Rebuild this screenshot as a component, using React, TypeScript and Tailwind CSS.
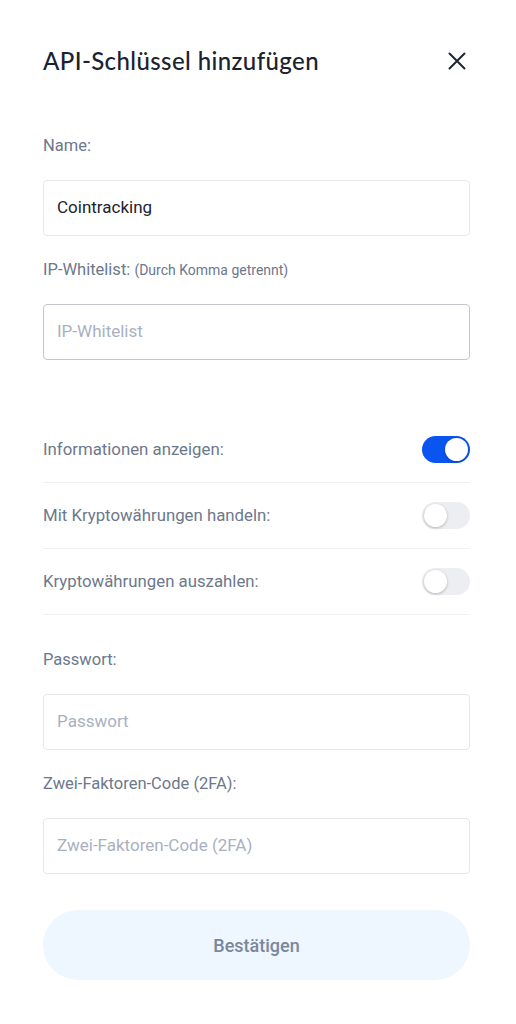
import { useState } from 'react'

function Toggle({ on }: { on: boolean }) {
  return (
    <div
      className={`relative w-[48px] h-[27px] rounded-full ${on ? 'bg-[#0a55f0]' : 'bg-[#eceef1]'}`}
    >
      <div
        className={`absolute top-[2px] w-[23px] h-[23px] rounded-full bg-white shadow-[0_1px_3px_rgba(0,0,0,0.25)] ${on ? 'right-[2px]' : 'left-[2px]'}`}
      />
    </div>
  )
}

function Field({ value, placeholder, focused }: { value?: string; placeholder: string; focused?: boolean }) {
  return (
    <div
      className={`h-[56px] flex items-center px-[13px] rounded-[4px] border ${focused ? 'border-[#c3c7cd]' : 'border-[#e6e8eb]'}`}
    >
      {value ? (
        <span className="text-[17px] text-[#1c2230]">{value}</span>
      ) : (
        <span className="text-[17px] text-[#a9b1bf]">{placeholder}</span>
      )}
    </div>
  )
}

export default function App() {
  const [perms] = useState([
    { label: 'Informationen anzeigen:', on: true },
    { label: 'Mit Kryptowährungen handeln:', on: false },
    { label: 'Kryptowährungen auszahlen:', on: false },
  ])

  return (
    <div className="min-h-screen bg-white pl-[43px] pr-[46px] pt-[46px] font-['Roboto',sans-serif]">
      {/* Header */}
      <div className="flex items-center justify-between h-[30px]">
        <h1 className="text-[24px] text-[#1c2230] font-['Lato',sans-serif] font-medium tracking-[0.4px]">
          API-Schlüssel hinzufügen
        </h1>
        <svg width="18" height="18" viewBox="0 0 18 18" className="mr-[4px]">
          <path d="M1.5 1.5 L16.5 16.5 M16.5 1.5 L1.5 16.5" stroke="#1f2533" strokeWidth="2" strokeLinecap="round" />
        </svg>
      </div>

      <div className="mt-[60px] text-[16.5px] leading-[20px] text-[#6c788c]">Name:</div>
      <div className="mt-[24px]">
        <Field value="Cointracking" placeholder="Name" />
      </div>

      <div className="mt-[24px] text-[16.5px] leading-[20px] text-[#6c788c]">
        IP-Whitelist: <span className="text-[14px]">(Durch Komma getrennt)</span>
      </div>
      <div className="mt-[24px]">
        <Field placeholder="IP-Whitelist" focused />
      </div>

      {/* Permissions */}
      <div className="mt-[57px]">
        {perms.map((p) => (
          <div key={p.label} className="h-[66px] flex items-center justify-between border-b border-[#eef0f2]">
            <span className="text-[16.8px] text-[#6c788c]">{p.label}</span>
            <Toggle on={p.on} />
          </div>
        ))}
      </div>

      <div className="mt-[35px] text-[16.5px] leading-[20px] text-[#6c788c]">Passwort:</div>
      <div className="mt-[24px]">
        <Field placeholder="Passwort" />
      </div>

      <div className="mt-[24px] text-[16.5px] leading-[20px] text-[#6c788c]">Zwei-Faktoren-Code (2FA):</div>
      <div className="mt-[24px]">
        <Field placeholder="Zwei-Faktoren-Code (2FA)" />
      </div>

      <button className="mt-[36px] w-full h-[70px] rounded-full bg-[#eef6ff] text-[18px] font-medium text-[#7b879a]">
        Bestätigen
      </button>
    </div>
  )
}
